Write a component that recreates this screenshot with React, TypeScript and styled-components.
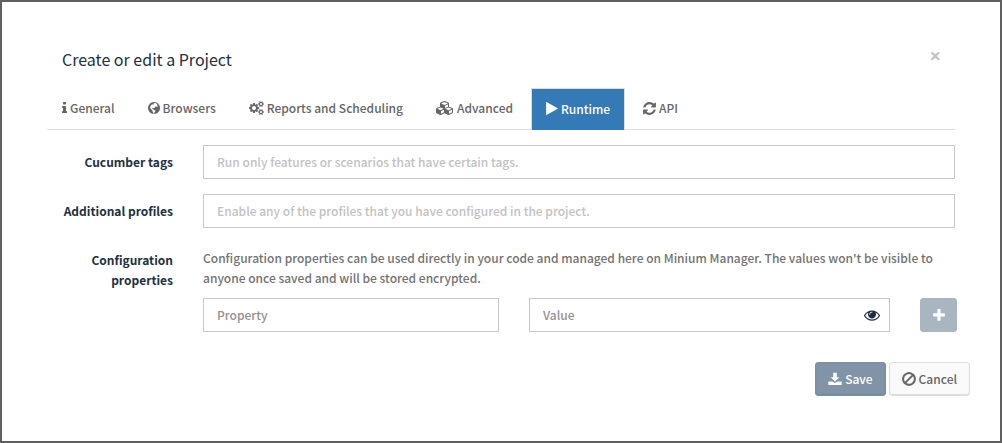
import React from 'react';
import styled, { createGlobalStyle } from 'styled-components';

const Global = createGlobalStyle`
  * { box-sizing: border-box; }
  html, body, #root { height: 100%; }
  body {
    margin: 0;
    background: #606060;
    font-family: "Noto Sans CJK SC", "Open Sans", sans-serif;
    font-size: 12px;
    font-weight: 500;
    line-height: 20px;
    color: #666;
  }
  button, input { font: inherit; }
`;

const Backdrop = styled.div`
  min-height: 100%;
  padding: 2px;
  display: flex;
`;

const Dialog = styled.main`
  flex: 1;
  padding: 37px 30px 16px 45px;
  background: #fff;
`;

const Header = styled.header`
  display: flex;
  justify-content: space-between;
  align-items: flex-start;
  padding: 8px 29px 8px 15px;
`;

const Title = styled.h1`
  margin: 0;
  font-size: 16px;
  line-height: 24px;
  font-weight: 400;
  color: #23303f;
`;

const CloseButton = styled.button`
  padding: 0;
  border: 0;
  background: none;
  color: #c4c4c4;
  font-family: "Open Sans", sans-serif;
  font-size: 20px;
  font-weight: 700;
  line-height: 18px;
`;

const Tabs = styled.nav`
  display: flex;
  align-items: flex-end;
  gap: 3px;
  margin: 9px 15px 0 0;
  border-bottom: 1px solid #ddd;
`;

const Tab = styled.a<{ $active?: boolean }>`
  display: flex;
  align-items: center;
  gap: 3px;
  height: 42px;
  margin-bottom: -1px;
  padding: ${p => (p.$active ? '0 14px 2px' : '0 14px 3px')};
  border: 1px solid ${p => (p.$active ? '#ddd' : 'transparent')};
  border-bottom: 0;
  background: ${p => (p.$active ? '#337ab7' : 'transparent')};
  color: ${p => (p.$active ? '#fff' : '#666')};
  text-decoration: none;
  white-space: nowrap;
`;

const Form = styled.form`
  margin: 0;
`;

const Fields = styled.div`
  display: grid;
  grid-template-columns: 126px 1fr;
  column-gap: 30px;
  row-gap: 15px;
  margin: 15px 15px 0 0;
`;

const Label = styled.label`
  padding-top: 7px;
  color: #23303f;
  font-weight: 700;
  text-align: right;
`;

const TextInput = styled.input<{ $strong?: boolean }>`
  width: 100%;
  height: 34px;
  padding: 0 13px 2px;
  border: 1px solid #c8c8c8;
  border-radius: 0;
  background: #fff;
  color: #666;
  &::placeholder {
    color: ${p => (p.$strong ? '#929292' : '#c2c2c2')};
    opacity: 1;
  }
`;

const Help = styled.p`
  margin: 5px 0 10px;
  color: #737373;
`;

const PropertyRow = styled.div`
  display: grid;
  grid-template-columns: 296fr 361fr 37px;
  column-gap: 30px;
  margin-right: -2px;
`;

const ValueBox = styled.div`
  position: relative;
`;

const RevealButton = styled.button`
  position: absolute;
  top: 0;
  right: 10px;
  height: 34px;
  padding: 0;
  border: 0;
  background: none;
  color: #1d2d3d;
  display: flex;
  align-items: center;
`;

const Button = styled.button<{ $kind: 'add' | 'save' | 'cancel' }>`
  display: flex;
  align-items: center;
  justify-content: center;
  gap: 3px;
  height: 34px;
  padding: 0 12px;
  border: 1px solid ${p => ({ add: '#a9b6c2', save: '#7b8fa3', cancel: '#ddd' })[p.$kind]};
  border-radius: 3px;
  background: ${p => ({ add: '#a9b6c2', save: '#8093a7', cancel: '#fafafa' })[p.$kind]};
  color: ${p => (p.$kind === 'cancel' ? '#666' : '#fff')};
  box-shadow: ${p => (p.$kind === 'add' ? 'none' : 'inset 0 -1px 1px rgba(80, 100, 120, 0.2)')};
`;

const Footer = styled.footer`
  display: flex;
  justify-content: flex-end;
  gap: 3px;
  margin-top: 30px;
`;

const Svg = styled.svg`
  display: block;
  flex: none;
  fill: currentColor;
  fill-rule: evenodd;
`;

const icons = {
  info: { w: 640, x: 576, d: 'M1216 1344v128q0 26-19 45t-45 19h-512q-26 0-45-19t-19-45v-128q0-26 19-45t45-19h64v-384h-64q-26 0-45-19t-19-45v-128q0-26 19-45t45-19h384q26 0 45 19t19 45v576h64q26 0 45 19t19 45zm-128-1152v192q0 26-19 45t-45 19h-256q-26 0-45-19t-19-45v-192q0-26 19-45t45-19h256q26 0 45 19t19 45z' },
  globe: { w: 1536, x: 128, d: 'M896 128a768 768 0 1 0 1 0zM1010 270l190 60 120 110-60 90 90 30 50 120-110 60-120-50-120 60-70 110-130 70-110-60-100 20 40 110 120 20 30 110 140 40 100 80-40 130-90 80-30 170-90-20-40-200-110-120 20-130-170-90-110-170 10-200 100-160 140-110 110 60 100-60-80-90z' },
  cogs: { w: 1920, x: 0, d: 'M896 896q0-106-75-181t-181-75-181 75-75 181 75 181 181 75 181-75 75-181zm768 512q0-52-38-90t-90-38-90 38-38 90q0 53 37.5 90.5t90.5 37.5 90.5-37.5 37.5-90.5zm0-1024q0-52-38-90t-90-38-90 38-38 90q0 53 37.5 90.5t90.5 37.5 90.5-37.5 37.5-90.5zm-384 421v185q0 10-7 19.5t-16 10.5l-155 24q-11 35-32 76 34 48 90 115 7 11 7 20 0 12-7 19-23 30-82.5 89.5t-78.5 59.5q-11 0-21-7l-115-90q-37 19-77 31-11 108-23 155-7 24-30 24h-186q-11 0-20-7.5t-10-17.5l-23-153q-34-10-75-31l-118 89q-7 7-20 7-11 0-21-8-144-133-144-160 0-9 7-19 10-14 41-53t47-61q-23-44-35-82l-152-24q-10-1-17-9.5t-7-19.5v-185q0-10 7-19.5t16-10.5l155-24q11-35 32-76-34-48-90-115-7-11-7-20 0-12 7-20 22-30 82-89t79-59q11 0 21 7l115 90q34-18 77-32 11-108 23-154 7-24 30-24h186q11 0 20 7.5t10 17.5l23 153q34 10 75 31l118-89q8-7 20-7 11 0 21 8 144 133 144 160 0 8-7 19-12 16-42 54t-45 60q23 48 34 82l152 23q10 2 17 10.5t7 19.5zm640 533v140q0 16-149 31-12 27-30 52 51 113 51 138 0 4-4 7-122 71-124 71-8 0-46-47t-52-68q-20 2-30 2t-30-2q-14 21-52 68t-46 47q-2 0-124-71-4-3-4-7 0-25 51-138-18-25-30-52-149-15-149-31v-140q0-16 149-31 13-29 30-52-51-113-51-138 0-4 4-7 4-2 35-20t59-34 30-16q8 0 46 46.5t52 67.5q20-2 30-2t30 2q51-71 92-112l6-2q4 0 124 70 4 3 4 7 0 25-51 138 17 23 30 52 149 15 149 31zm0-1024v140q0 16-149 31-12 27-30 52 51 113 51 138 0 4-4 7-122 71-124 71-8 0-46-47t-52-68q-20 2-30 2t-30-2q-14 21-52 68t-46 47q-2 0-124-71-4-3-4-7 0-25 51-138-18-25-30-52-149-15-149-31v-140q0-16 149-31 13-29 30-52-51-113-51-138 0-4 4-7 4-2 35-20t59-34 30-16q8 0 46 46.5t52 67.5q20-2 30-2t30 2q51-71 92-112l6-2q4 0 124 70 4 3 4 7 0 25-51 138 17 23 30 52 149 15 149 31z' },
  cubes: { w: 2304, x: 0, d: 'M640 1632l384-192v-314l-384 164v342zm-64-454l404-173-404-173-404 173zm1088 454l384-192v-314l-384 164v342zm-64-454l404-173-404-173-404 173zm-448-293l384-165v-266l-384 164v267zm-64-379l441-189-441-189-441 189zm1088 518v416q0 36-19 67t-52 47l-448 224q-25 14-57 14t-57-14l-448-224q-4-2-7-4-2 2-7 4l-448 224q-25 14-57 14t-57-14l-448-224q-33-16-52-47t-19-67v-416q0-38 21.5-70t56.5-48l434-186v-400q0-38 21.5-70t56.5-48l448-192q23-10 50-10t50 10l448 192q35 16 56.5 48t21.5 70v400l434 186q36 16 57 48t21 70z' },
  play: { w: 1408, x: 192, d: 'M1576 927l-1328 738q-23 13-39.5 3t-16.5-36v-1472q0-26 16.5-36t39.5 3l1328 738q23 13 23 31t-23 31z' },
  refresh: { w: 1536, x: 128, d: 'M1639 1056q0 5-1 7-64 268-268 434.5t-478 166.5q-146 0-282.5-55t-243.5-157l-129 129q-19 19-45 19t-45-19-19-45v-448q0-26 19-45t45-19h448q26 0 45 19t19 45-19 45l-137 137q71 66 161 102t187 36q134 0 250-65t186-179q11-17 53-117 8-23 30-23h192q13 0 22.5 9.5t9.5 22.5zm25-800v448q0 26-19 45t-45 19h-448q-26 0-45-19t-19-45 19-45l138-138q-148-137-349-137-134 0-250 65t-186 179q-11 17-53 117-8 23-30 23h-199q-13 0-22.5-9.5t-9.5-22.5v-7q65-268 270-434.5t480-166.5q146 0 284 55.5t245 156.5l130-129q19-19 45-19t45 19 19 45z' },
  plus: { w: 1408, x: 192, d: 'M1600 736v192q0 40-28 68t-68 28h-416v416q0 40-28 68t-68 28h-192q-40 0-68-28t-28-68v-416h-416q-40 0-68-28t-28-68v-192q0-40 28-68t68-28h416v-416q0-40 28-68t68-28h192q40 0 68 28t28 68v416h416q40 0 68 28t28 68z' },
  eye: { w: 1792, x: 0, d: 'M1664 960q-152-236-381-353 61 104 61 225 0 185-131.5 316.5t-316.5 131.5-316.5-131.5-131.5-316.5q0-121 61-225-229 117-381 353 133 205 333.5 326.5t434.5 121.5 434.5-121.5 333.5-326.5zm-720-384q0-20-14-34t-34-14q-125 0-214.5 89.5t-89.5 214.5q0 20 14 34t34 14 34-14 14-34q0-86 61-147t147-61q20 0 34-14t14-34zm848 384q0 34-20 69-140 230-376.5 368.5t-499.5 138.5-499.5-139-376.5-368q-20-35-20-69t20-69q140-229 376.5-368t499.5-139 499.5 139 376.5 368q20 35 20 69z' },
  ban: { w: 1536, x: 128, d: 'M1440 893q0-161-87-295l-754 753q137 89 297 89 111 0 211.5-43.5t173.5-116.5 116-174.5 43-212.5zm-999 299l755-754q-135-91-300-91-148 0-273 73t-198 199-73 274q0 162 89 299zm1223-299q0 157-61 300t-163.5 246-245 164-298.5 61-298.5-61-245-164-163.5-246-61-300 61-299.5 163.5-245.5 245-164 298.5-61 298.5 61 245 164 163.5 245.5 61 299.5z' },
  save: { w: 1792, x: 0, d: 'M670 100h452v560h330l-556 560-556-560h330zM40 1200h500l356 220 356-220h500v460h-1712z' },
};

function Icon({ name, size = 14 }: { name: keyof typeof icons; size?: number }) {
  const { w, x, d } = icons[name];
  return (
    <Svg width={Math.round((w / 1792) * size)} height={size} viewBox={`${x} 0 ${w} 1792`} aria-hidden="true">
      <path d={d} />
    </Svg>
  );
}

export default function App() {
  return (
    <>
      <Global />
      <Backdrop>
        <Dialog role="dialog" aria-labelledby="dialog-title">
          <Header>
            <Title id="dialog-title">Create or edit a Project</Title>
            <CloseButton type="button" aria-label="Close">×</CloseButton>
          </Header>
          <Tabs>
            <Tab href="#general"><Icon name="info" />General</Tab>
            <Tab href="#browsers"><Icon name="globe" />Browsers</Tab>
            <Tab href="#reports"><Icon name="cogs" />Reports and Scheduling</Tab>
            <Tab href="#advanced"><Icon name="cubes" />Advanced</Tab>
            <Tab href="#runtime" $active aria-current="page"><Icon name="play" size={15} />Runtime</Tab>
            <Tab href="#api"><Icon name="refresh" size={15} />API</Tab>
          </Tabs>
          <Form onSubmit={e => e.preventDefault()}>
            <Fields>
              <Label htmlFor="tags">Cucumber tags</Label>
              <TextInput id="tags" placeholder="Run only features or scenarios that have certain tags." />
              <Label htmlFor="profiles">Additional profiles</Label>
              <TextInput id="profiles" placeholder="Enable any of the profiles that you have configured in the project." />
              <Label htmlFor="property">Configuration properties</Label>
              <div>
                <Help>
                  Configuration properties can be used directly in your code and managed here on Minium Manager. The
                  values won't be visible to anyone once saved and will be stored encrypted.
                </Help>
                <PropertyRow>
                  <TextInput id="property" $strong placeholder="Property" />
                  <ValueBox>
                    <TextInput $strong aria-label="Value" placeholder="Value" />
                    <RevealButton type="button" aria-label="Show value"><Icon name="eye" size={16} /></RevealButton>
                  </ValueBox>
                  <Button $kind="add" type="button" aria-label="Add property"><Icon name="plus" size={15} /></Button>
                </PropertyRow>
              </div>
            </Fields>
            <Footer>
              <Button $kind="save" type="submit"><Icon name="save" size={14} />Save</Button>
              <Button $kind="cancel" type="button"><Icon name="ban" size={16} />Cancel</Button>
            </Footer>
          </Form>
        </Dialog>
      </Backdrop>
    </>
  );
}
